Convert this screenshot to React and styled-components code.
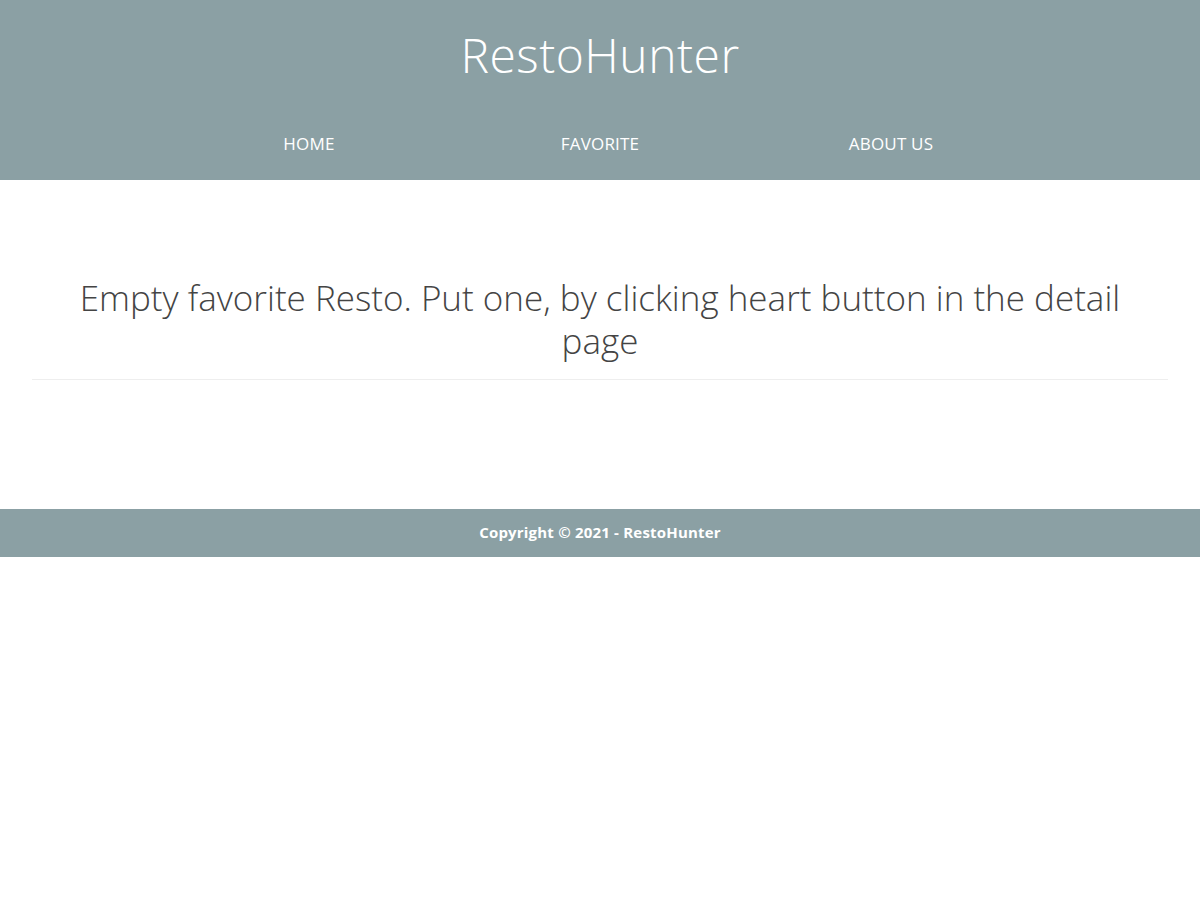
import React from 'react';
import styled, { createGlobalStyle } from 'styled-components';

const GlobalStyle = createGlobalStyle`
  body {
    margin: 0;
    font-family: "Open Sans", "Noto Sans", sans-serif;
    background: #ffffff;
  }
`;

const Header = styled.header`
  background: #8ba0a4;
  height: 180px;
  display: flex;
  flex-flow: column;
  align-items: center;
`;

const Title = styled.h1`
  margin: 26px 0 0;
  color: #ffffff;
  font-weight: 300;
  font-size: 48px;
  line-height: 58px;
  letter-spacing: 0.5px;
`;

const Nav = styled.nav`
  display: grid;
  grid-template-columns: repeat(3, 291px);
  margin-top: 49px;
`;

const NavLink = styled.a`
  color: #ffffff;
  text-align: center;
  font-size: 17px;
  letter-spacing: 0.2px;
  text-decoration: none;
  line-height: 22px;
`;

const Main = styled.main`
  padding: 96px 32px 0;
  height: 233px;
`;

const Message = styled.h2`
  margin: 0;
  padding: 0 40px 17px;
  border-bottom: 1px solid #eeeeee;
  text-align: center;
  color: #444444;
  font-weight: 300;
  font-size: 35px;
  line-height: 43px;
`;

const Footer = styled.footer`
  background: #8ba0a4;
  height: 48px;
  display: flex;
  align-items: center;
  justify-content: center;
  color: #ffffff;
  font-weight: 700;
  font-size: 15px;
  letter-spacing: 0.2px;
  padding-bottom: 3px;
  box-sizing: border-box;
`;

export default function App() {
  return (
    <>
      <GlobalStyle />
      <Header>
        <Title>RestoHunter</Title>
        <Nav>
          <NavLink href="#">HOME</NavLink>
          <NavLink href="#">FAVORITE</NavLink>
          <NavLink href="#">ABOUT US</NavLink>
        </Nav>
      </Header>
      <Main>
        <Message>Empty favorite Resto. Put one, by clicking heart button in the detail page</Message>
      </Main>
      <Footer>Copyright © 2021 - RestoHunter</Footer>
    </>
  );
}
